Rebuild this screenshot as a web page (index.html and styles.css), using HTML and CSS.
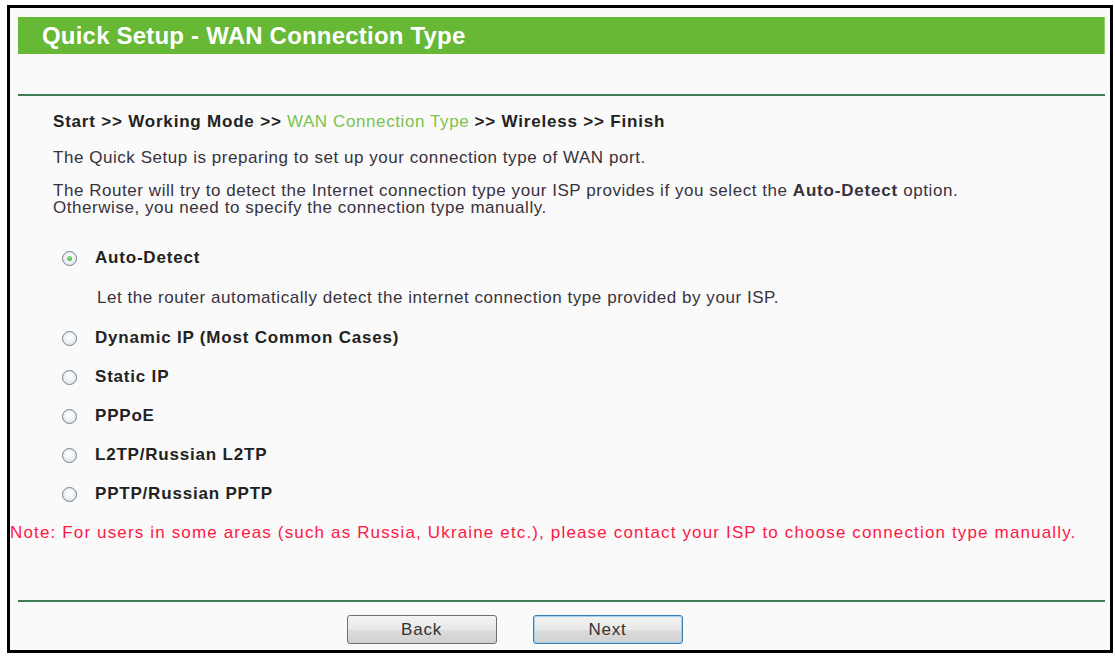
FILE: index.html
```html
<!DOCTYPE html>
<html>
<head>
<meta charset="utf-8">
<link rel="stylesheet" href="styles.css">
</head>
<body>
<div class="frame">
  <div class="titlebar">Quick Setup - WAN Connection Type</div>
  <div class="rule rule-top"></div>
  <div class="content">
    <div class="row crumbs"><b>Start &gt;&gt; Working Mode &gt;&gt;</b> <span class="cur">WAN Connection Type</span> <b>&gt;&gt; Wireless &gt;&gt; Finish</b></div>
    <div class="row para1">The Quick Setup is preparing to set up your connection type of WAN port.</div>
    <div class="row para2">The Router will try to detect the Internet connection type your ISP provides if you select the <b>Auto-Detect</b> option.<br>Otherwise, you need to specify the connection type manually.</div>
    <label class="opt opt-first"><span class="radio checked"></span><b>Auto-Detect</b></label>
    <div class="row desc">Let the router automatically detect the internet connection type provided by your ISP.</div>
    <label class="opt opt-after-desc"><span class="radio"></span><b>Dynamic IP (Most Common Cases)</b></label>
    <label class="opt"><span class="radio"></span><b>Static IP</b></label>
    <label class="opt"><span class="radio"></span><b>PPPoE</b></label>
    <label class="opt"><span class="radio"></span><b>L2TP/Russian L2TP</b></label>
    <label class="opt"><span class="radio"></span><b>PPTP/Russian PPTP</b></label>
  </div>
  <div class="note">Note: For users in some areas (such as Russia, Ukraine etc.), please contact your ISP to choose connection type manually.</div>
  <div class="rule rule-bottom"></div>
  <div class="buttons">
    <button class="btn">Back</button>
    <button class="btn btn-focus">Next</button>
  </div>
</div>
</body>
</html>
```
FILE: styles.css
```css
html, body {
  margin: 0;
  padding: 0;
  background: #ffffff;
}
body {
  font-family: "Liberation Sans", Arial, sans-serif;
  font-size: 17px;
  color: #38323d;
}
.frame {
  margin: 5px 0 0 7px;
  border: 3px solid #000000;
  background: #fafafa;
  padding: 9px 5px 0 8px;
  box-sizing: border-box;
  width: 1106px;
  height: 648px;
  display: flex;
  flex-direction: column;
}
.titlebar {
  height: 37px;
  background: #67b834;
  color: #ffffff;
  font-weight: bold;
  font-size: 24px;
  letter-spacing: 0.2px;
  line-height: 37px;
  padding-left: 24px;
  border-right: 1px solid #8fcf6a;
}
.rule {
  height: 2px;
  background: #3e7d52;
}
.rule-top {
  margin-top: 40px;
}
.content {
  padding-left: 35px;
}
.row {
  line-height: 18px;
  letter-spacing: 0.55px;
}
.row b, .opt b {
  letter-spacing: 0.8px;
}
.crumbs {
  margin-top: 17px;
  color: #222222;
}
.crumbs .cur {
  color: #7cc34f;
  letter-spacing: 0.6px;
}
.para1 {
  margin-top: 18px;
}
.para2 {
  margin-top: 15px;
  line-height: 17px;
}
.opt {
  display: flex;
  align-items: center;
  height: 18px;
  margin-top: 21px;
  color: #222222;
}
.opt-first {
  margin-top: 33px;
}
.opt-after-desc {
  margin-top: 22px;
}
.desc {
  margin-top: 22px;
  padding-left: 44px;
}
.radio {
  width: 15px;
  height: 15px;
  box-sizing: border-box;
  border-radius: 50%;
  border: 1px solid #6e8296;
  background: radial-gradient(circle at 50% 40%, #ffffff 0%, #f3f3f3 45%, #d2d7dc 100%);
  box-shadow: inset 0 0 0 1px #e9ecef;
  margin-left: 9px;
  margin-right: 18px;
  position: relative;
  flex: none;
}
.radio.checked::after {
  content: "";
  position: absolute;
  left: 4px;
  top: 4px;
  width: 5px;
  height: 5px;
  border-radius: 50%;
  background: radial-gradient(circle at 40% 35%, #8ee680 0%, #2ea63a 100%);
}
.note {
  margin-top: 21px;
  line-height: 18px;
  color: #ff1744;
  letter-spacing: 1.15px;
  margin-left: -8px;
  white-space: nowrap;
}
.rule-bottom {
  margin-top: 58px;
}
.buttons {
  display: flex;
  justify-content: center;
  gap: 36px;
  margin-top: 13px;
  padding-right: 94px;
}
.btn {
  width: 150px;
  height: 29px;
  box-sizing: border-box;
  border: 1px solid #707070;
  border-radius: 3px;
  background: linear-gradient(#f4f4f4, #e8e8e8 50%, #dddddd 51%, #d0d0d0);
  font-family: "Liberation Sans", Arial, sans-serif;
  font-size: 17px;
  letter-spacing: 0.8px;
  color: #333333;
  padding: 0;
}
.btn-focus {
  border: 1px solid #3c7fb1;
  box-shadow: inset 0 0 0 1px #9fd2f0;
}
```
